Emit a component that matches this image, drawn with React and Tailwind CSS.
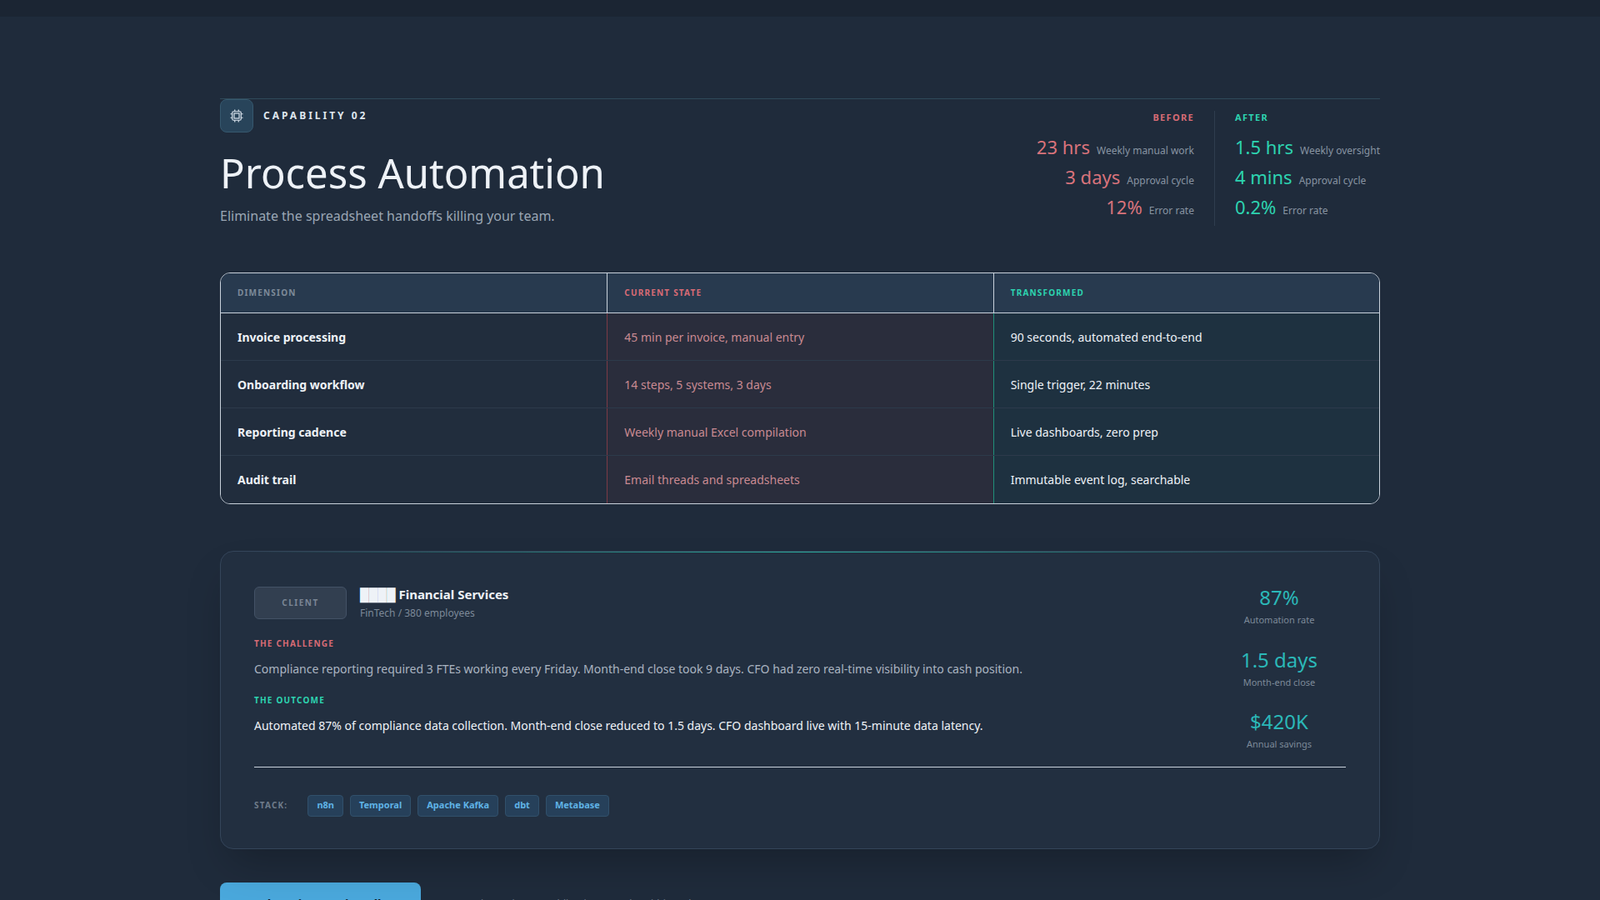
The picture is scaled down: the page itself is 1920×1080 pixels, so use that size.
const before = [
  ["23 hrs", "Weekly manual work"],
  ["3 days", "Approval cycle"],
  ["12%", "Error rate"],
];
const after = [
  ["1.5 hrs", "Weekly oversight"],
  ["4 mins", "Approval cycle"],
  ["0.2%", "Error rate"],
];
const rows = [
  ["Invoice processing", "45 min per invoice, manual entry", "90 seconds, automated end-to-end"],
  ["Onboarding workflow", "14 steps, 5 systems, 3 days", "Single trigger, 22 minutes"],
  ["Reporting cadence", "Weekly manual Excel compilation", "Live dashboards, zero prep"],
  ["Audit trail", "Email threads and spreadsheets", "Immutable event log, searchable"],
];
const results = [
  ["87%", "Automation rate"],
  ["1.5 days", "Month-end close"],
  ["$420K", "Annual savings"],
];
const stack = ["n8n", "Temporal", "Apache Kafka", "dbt", "Metabase"];

const serif = "font-[family-name:'Liberation_Serif',serif]";

export default function App() {
  return (
    <div className="min-h-[1080px] bg-[#1f2b3b] font-[family-name:'Liberation_Sans',Arial,sans-serif] text-white">
      <div className="h-5 bg-[#1b2533]" />
      <div className="mx-auto w-[1392px] pt-[98px]">
        {/* header */}
        <div className="border-t border-[#2f4a5a] flex justify-between">
          <div>
            <div className="flex items-center gap-3">
              <div className="w-10 h-10 rounded-lg bg-[#28445a] border border-[#36586e] flex items-center justify-center">
                <svg width="18" height="18" viewBox="0 0 24 24" fill="none" stroke="#dbe4ee" strokeWidth="1.6">
                  <rect x="5" y="5" width="14" height="14" rx="2" />
                  <rect x="8" y="8" width="8" height="8" />
                  <path d="M9 2v3M15 2v3M9 19v3M15 19v3M2 9h3M2 15h3M19 9h3M19 15h3" />
                </svg>
              </div>
              <span className="text-[12px] font-bold tracking-[0.25em] text-[#dfe6ee]">CAPABILITY 02</span>
            </div>
            <h1 className={`${serif} text-[49px] leading-none text-[#eef2f7] mt-[24px]`}>Process Automation</h1>
            <p className="text-[16px] text-[#9aa6b4] mt-[15px]">Eliminate the spreadsheet handoffs killing your team.</p>
          </div>
          <div className="flex pt-[14px]">
            <div className="flex flex-col items-end pr-6 border-r border-[#2f3d4e] pb-3">
              <span className="text-[11px] font-bold tracking-[0.12em] text-[#d86b75]">BEFORE</span>
              {before.map(([v, l]) => (
                <div key={l} className="flex items-baseline gap-2 mt-[10px] h-[26px]">
                  <span className={`${serif} text-[22px] text-[#d9737b]`}>{v}</span>
                  <span className="text-[12px] text-[#8894a2]">{l}</span>
                </div>
              ))}
            </div>
            <div className="flex flex-col items-start pl-6">
              <span className="text-[11px] font-bold tracking-[0.12em] text-[#2dd4b0]">AFTER</span>
              {after.map(([v, l]) => (
                <div key={l} className="flex items-baseline gap-2 mt-[10px] h-[26px]">
                  <span className={`${serif} text-[22px] text-[#2dd4b0]`}>{v}</span>
                  <span className="text-[12px] text-[#8894a2]">{l}</span>
                </div>
              ))}
            </div>
          </div>
        </div>

        {/* table */}
        <div className="mt-[56px] rounded-xl border border-[#c9d2dc] overflow-hidden">
          <div className="grid grid-cols-3 h-[48px] bg-[#283a4f] border-b border-[#c9d2dc] text-[10px] font-bold tracking-[0.12em]">
            <div className="px-5 flex items-center text-[#7d8a99]">DIMENSION</div>
            <div className="px-5 flex items-center text-[#d86b75] border-l border-[#c9d2dc]">CURRENT STATE</div>
            <div className="px-5 flex items-center text-[#2dd4b0] border-l border-[#c9d2dc]">TRANSFORMED</div>
          </div>
          {rows.map(([a, b, c], i) => (
            <div key={a} className={`grid grid-cols-3 h-[57px] text-[14px] ${i < 3 ? "border-b border-[#2c3a4b]" : ""}`}>
              <div className="px-5 flex items-center font-bold text-[#eef2f7] bg-[#212d3d]">{a}</div>
              <div className="px-5 flex items-center text-[#c98a92] bg-[#2a2d3c] border-l border-[#7a3b46]">{b}</div>
              <div className="px-5 flex items-center text-[#eef2f7] bg-[#1e3140] border-l border-[#1f8f7a]">{c}</div>
            </div>
          ))}
        </div>

        {/* case study */}
        <div className="relative mt-[56px] rounded-2xl border border-[#34455a] bg-[#222f40] shadow-2xl px-10 pt-10 pb-[38px]">
          <div className="absolute top-0 left-6 right-6 h-px bg-gradient-to-r from-transparent via-[#2aa89a] to-transparent" />
          <div className="flex justify-between">
            <div>
              <div className="flex items-center gap-4">
                <div className="w-[111px] h-[39px] rounded-md bg-[#323f50] border border-[#435266] flex items-center justify-center text-[10px] font-bold tracking-[0.15em] text-[#7a8695]">CLIENT</div>
                <div>
                  <div className="text-[15px] font-bold text-[#eef2f7]">████ Financial Services</div>
                  <div className="text-[12px] text-[#7d8a99] mt-0.5">FinTech / 380 employees</div>
                </div>
              </div>
              <div className="mt-[20px] text-[10px] font-bold tracking-[0.12em] text-[#d86b75]">THE CHALLENGE</div>
              <p className="mt-[12px] text-[14px] text-[#aab4c0]">Compliance reporting required 3 FTEs working every Friday. Month-end close took 9 days. CFO had zero real-time visibility into cash position.</p>
              <div className="mt-[20px] text-[10px] font-bold tracking-[0.12em] text-[#2dd4b0]">THE OUTCOME</div>
              <p className="mt-[12px] text-[14px] text-[#eef2f7]">Automated 87% of compliance data collection. Month-end close reduced to 1.5 days. CFO dashboard live with 15-minute data latency.</p>
            </div>
            <div className="w-[150px] mr-[5px] flex flex-col items-center gap-[24px]">
              {results.map(([v, l]) => (
                <div key={l} className="flex flex-col items-center">
                  <span className={`${serif} text-[24px] leading-[30px] text-[#2bb8b8]`}>{v}</span>
                  <span className="text-[11px] text-[#7d8a99] mt-1">{l}</span>
                </div>
              ))}
            </div>
          </div>
          <div className="mt-[18px] border-t border-[#c9d2dc]" />
          <div className="mt-[33px] flex items-center gap-2">
            <span className="text-[10px] font-bold tracking-[0.12em] text-[#6f7c8b] mr-4">STACK:</span>
            {stack.map((s) => (
              <span key={s} className="px-[10px] h-[26px] flex items-center rounded bg-[#26405a] border border-[#31506b] text-[11px] font-bold text-[#5fb3e6]">{s}</span>
            ))}
          </div>
        </div>

        {/* cta */}
        <div className="mt-[40px] flex items-center gap-4">
          <button className="h-[52px] px-7 rounded-lg bg-[#4aa8dc] text-[15px] font-bold text-[#0f1b2a]">Book a Diagnostic Call →</button>
          <span className="text-[12px] text-[#6f7c8b]">Free 45-min session · No obligation · Results within 48 hrs</span>
        </div>
      </div>
    </div>
  );
}
